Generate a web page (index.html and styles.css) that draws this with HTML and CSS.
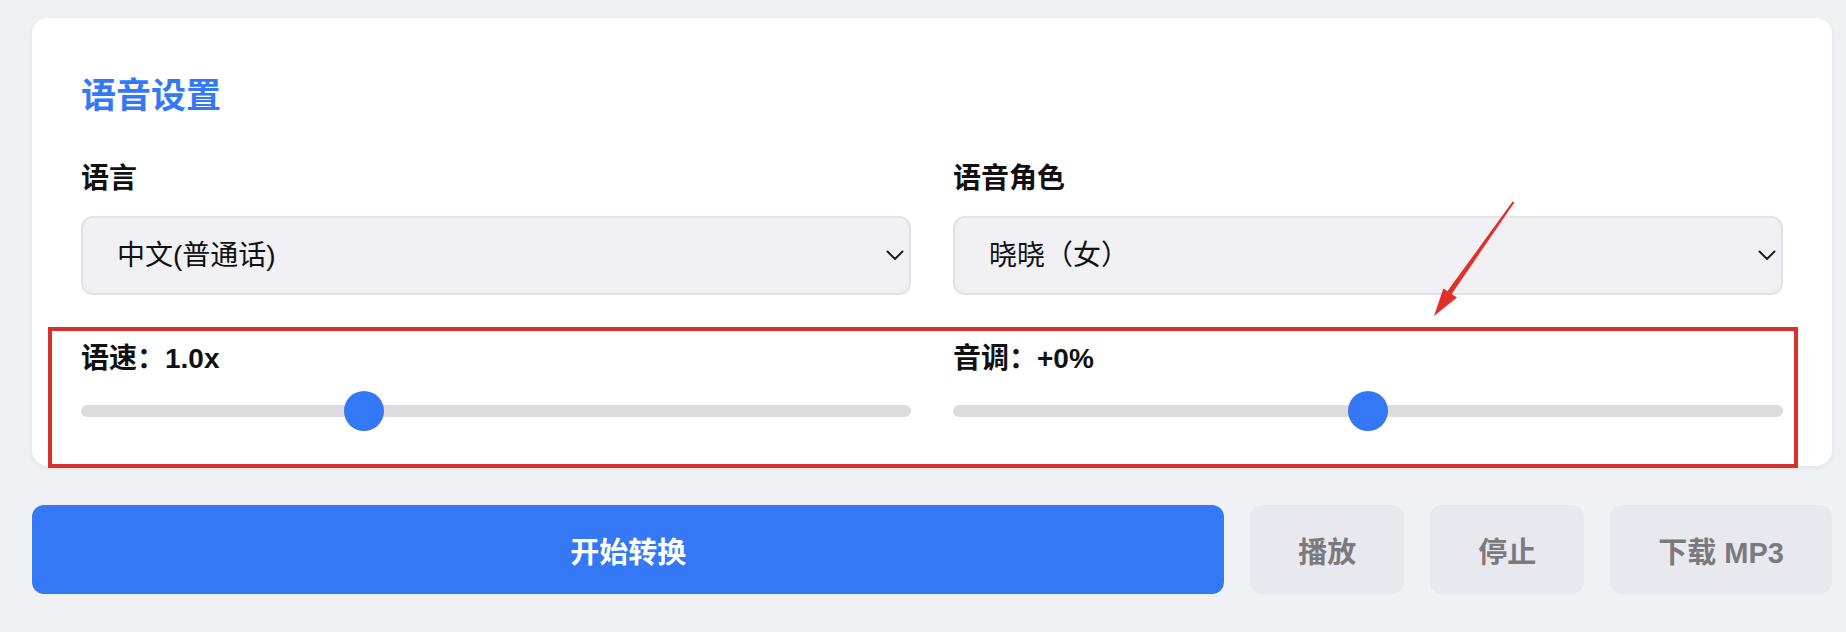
FILE: index.html
```html
<!DOCTYPE html>
<html lang="zh-CN">
<head>
    <meta charset="UTF-8">
    <title>语音设置</title>
    <link rel="stylesheet" href="styles.css">
</head>
<body>
<div class="page">
    <section class="card">
        <h2 class="card-title">语音设置</h2>
        <div class="settings-grid">
            <div class="field">
                <label for="language">语言</label>
                <div class="select-wrap">
                    <select id="language">
                        <option>中文(普通话)</option>
                        <option>English</option>
                    </select>
                    <svg class="chevron" width="18" height="11" viewBox="0 0 18 11"><path d="M1.5 1.5 L9 9 L16.5 1.5" fill="none" stroke="#1f1f1f" stroke-width="2" stroke-linecap="round" stroke-linejoin="round"/></svg>
                </div>
            </div>
            <div class="field">
                <label for="voice">语音角色</label>
                <div class="select-wrap">
                    <select id="voice">
                        <option>晓晓（女）</option>
                        <option>云希（男）</option>
                    </select>
                    <svg class="chevron" width="18" height="11" viewBox="0 0 18 11"><path d="M1.5 1.5 L9 9 L16.5 1.5" fill="none" stroke="#1f1f1f" stroke-width="2" stroke-linecap="round" stroke-linejoin="round"/></svg>
                </div>
            </div>
            <div class="field">
                <label for="rate">语速：<span id="rateValue">1.0x</span></label>
                <input type="range" id="rate" min="0.5" max="2" step="0.1" value="1">
            </div>
            <div class="field">
                <label for="pitch">音调：<span id="pitchValue">+0%</span></label>
                <input type="range" id="pitch" min="-50" max="50" step="1" value="0">
            </div>
        </div>
    </section>

    <div class="actions">
        <button class="btn btn-primary">开始转换</button>
        <button class="btn btn-secondary">播放</button>
        <button class="btn btn-secondary">停止</button>
        <button class="btn btn-secondary">下载 MP3</button>
    </div>

    <!-- annotation overlay -->
    <div class="mark-box"></div>
    <svg class="mark-arrow" width="1846" height="632" viewBox="0 0 1846 632">
        <polygon points="1512.6,201.6 1514.4,202.4 1451.6,294.2 1447.4,291.3" fill="#e0302a"/>
        <polygon points="1434,316 1457,297.5 1443.4,288.5" fill="#e0302a"/>
    </svg>
</div>
</body>
</html>
```

FILE: styles.css
```css
* {
    box-sizing: border-box;
}

body {
    margin: 0;
    background: #f0f1f5;
    font-family: 'Liberation Sans', 'Noto Sans CJK SC', sans-serif;
    color: #111;
}

.page {
    position: relative;
    height: 632px;
    padding: 18px 14px 0 32px;
    overflow: hidden;
}

.card {
    background: #fff;
    border-radius: 16px;
    box-shadow: 0 2px 6px rgba(0, 0, 0, 0.06);
    padding: 56px 49px 35px 49px;
}

.card-title {
    margin: 0 0 43px;
    font-size: 35px;
    line-height: 44px;
    font-weight: bold;
    color: #3478f6;
}

.settings-grid {
    display: grid;
    grid-template-columns: 1fr 1fr;
    column-gap: 42px;
    row-gap: 46px;
}

.field label {
    display: block;
    font-size: 28px;
    line-height: 36px;
    font-weight: bold;
    color: #111;
}

.select-wrap {
    position: relative;
    margin-top: 19px;
}

.select-wrap select {
    -webkit-appearance: none;
    appearance: none;
    display: block;
    width: 100%;
    height: 79px;
    padding: 0 40px 0 34px;
    border: 2px solid #e2e2e7;
    border-radius: 12px;
    background: #f0f0f5;
    font-family: inherit;
    font-size: 28px;
    color: #111;
    outline: none;
}

.chevron {
    position: absolute;
    right: 7px;
    top: 34px;
    pointer-events: none;
}

input[type="range"] {
    -webkit-appearance: none;
    appearance: none;
    display: block;
    width: 100%;
    height: 40px;
    margin: 14px 0 0;
    background: transparent;
}

input[type="range"]::-webkit-slider-runnable-track {
    height: 12px;
    border-radius: 6px;
    background: #dcdcdf;
}

input[type="range"]::-webkit-slider-thumb {
    -webkit-appearance: none;
    width: 40px;
    height: 40px;
    margin-top: -14px;
    border-radius: 50%;
    background: #3478f6;
    border: none;
}

.actions {
    display: flex;
    gap: 26px;
    margin-top: 39px;
}

.btn {
    height: 89px;
    border: none;
    border-radius: 12px;
    font-family: inherit;
    font-size: 29px;
    font-weight: bold;
    cursor: pointer;
}

.btn-primary {
    flex: 1;
    background: #3478f6;
    color: #fff;
}

.btn-secondary {
    padding: 0 48px;
    background: #e8e9ee;
    color: #7a7a7e;
}

.mark-box {
    position: absolute;
    left: 48px;
    top: 327px;
    width: 1750px;
    height: 141px;
    border: 4px solid #d8302b;
    pointer-events: none;
}

.mark-arrow {
    position: absolute;
    left: 0;
    top: 0;
    pointer-events: none;
}
```
